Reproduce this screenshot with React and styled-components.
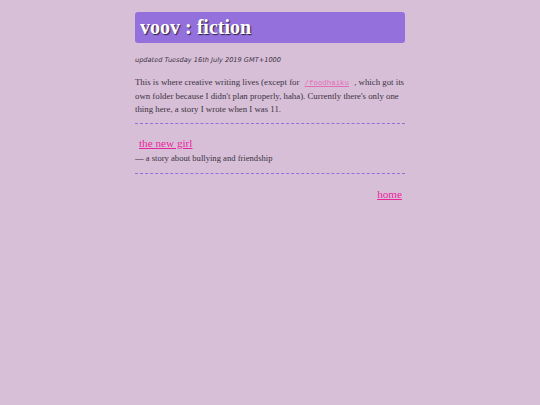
import React from "react";
import styled, { createGlobalStyle } from "styled-components";

const Global = createGlobalStyle`
  html, body {
    margin: 0;
    padding: 0;
    background: #d8bfd8;
  }
  body {
    font-family: "Liberation Serif", "Times New Roman", serif;
    color: #3a3340;
  }
`;

const Page = styled.div`
  width: 270px;
  margin: 0 auto;
  padding-top: 12px;
`;

const Banner = styled.h1`
  margin: 0;
  height: 31px;
  display: flex;
  align-items: center;
  padding: 0 5px;
  background: #9370db;
  border-radius: 3px;
  color: #fff;
  font-family: "Liberation Serif", serif;
  font-weight: 700;
  font-size: 20px;
  text-shadow: 1px 1px 1px #2a1f45;
`;

const Updated = styled.p`
  margin: 13px 0 0;
  font-family: "DejaVu Sans", Verdana, sans-serif;
  font-style: italic;
  font-size: 6.6px;
  color: #3a3340;
`;

const Text = styled.p`
  margin: 12px 0 0;
  font-size: 8.8px;
  line-height: 13px;
`;

const Code = styled.a`
  font-family: "Liberation Mono", monospace;
  font-size: 7.4px;
  color: #e36bb8;
  margin: 0 3px;
  text-decoration: underline;
`;

const Rule = styled.hr`
  border: none;
  border-top: 1px dashed #9370db;
  margin: ${(p) => p.$top}px 0 0;
`;

const Entry = styled.div`
  margin-top: 9px;
`;

const StoryLink = styled.a`
  display: inline-block;
  margin: 0 ${(p) => (p.$end ? 3 : 0)}px 0 ${(p) => (p.$end ? 0 : 4)}px;
  font-size: 11.2px;
  color: #e8249a;
  text-decoration: underline;
`;

const Blurb = styled.div`
  margin-top: 2px;
  font-size: 8.6px;
`;

const Footer = styled.div`
  display: flex;
  justify-content: flex-end;
  margin-top: 14px;
`;

export default function App() {
  return (
    <>
      <Global />
      <Page>
        <Banner>voov : fiction</Banner>
        <Updated>updated Tuesday 16th July 2019 GMT+1000</Updated>
        <Text>
          This is where creative writing lives (except for{" "}
          <Code href="#">/foodhaiku</Code> , which got its own folder because I
          didn't plan properly, haha). Currently there's only one thing here, a
          story I wrote when I was 11.
        </Text>
        <Rule $top={7} />
        <Entry>
          <StoryLink href="#">the new girl</StoryLink>
          <Blurb>— a story about bullying and friendship</Blurb>
        </Entry>
        <Rule $top={10} />
        <Footer>
          <StoryLink href="#" $end>
            home
          </StoryLink>
        </Footer>
      </Page>
    </>
  );
}
